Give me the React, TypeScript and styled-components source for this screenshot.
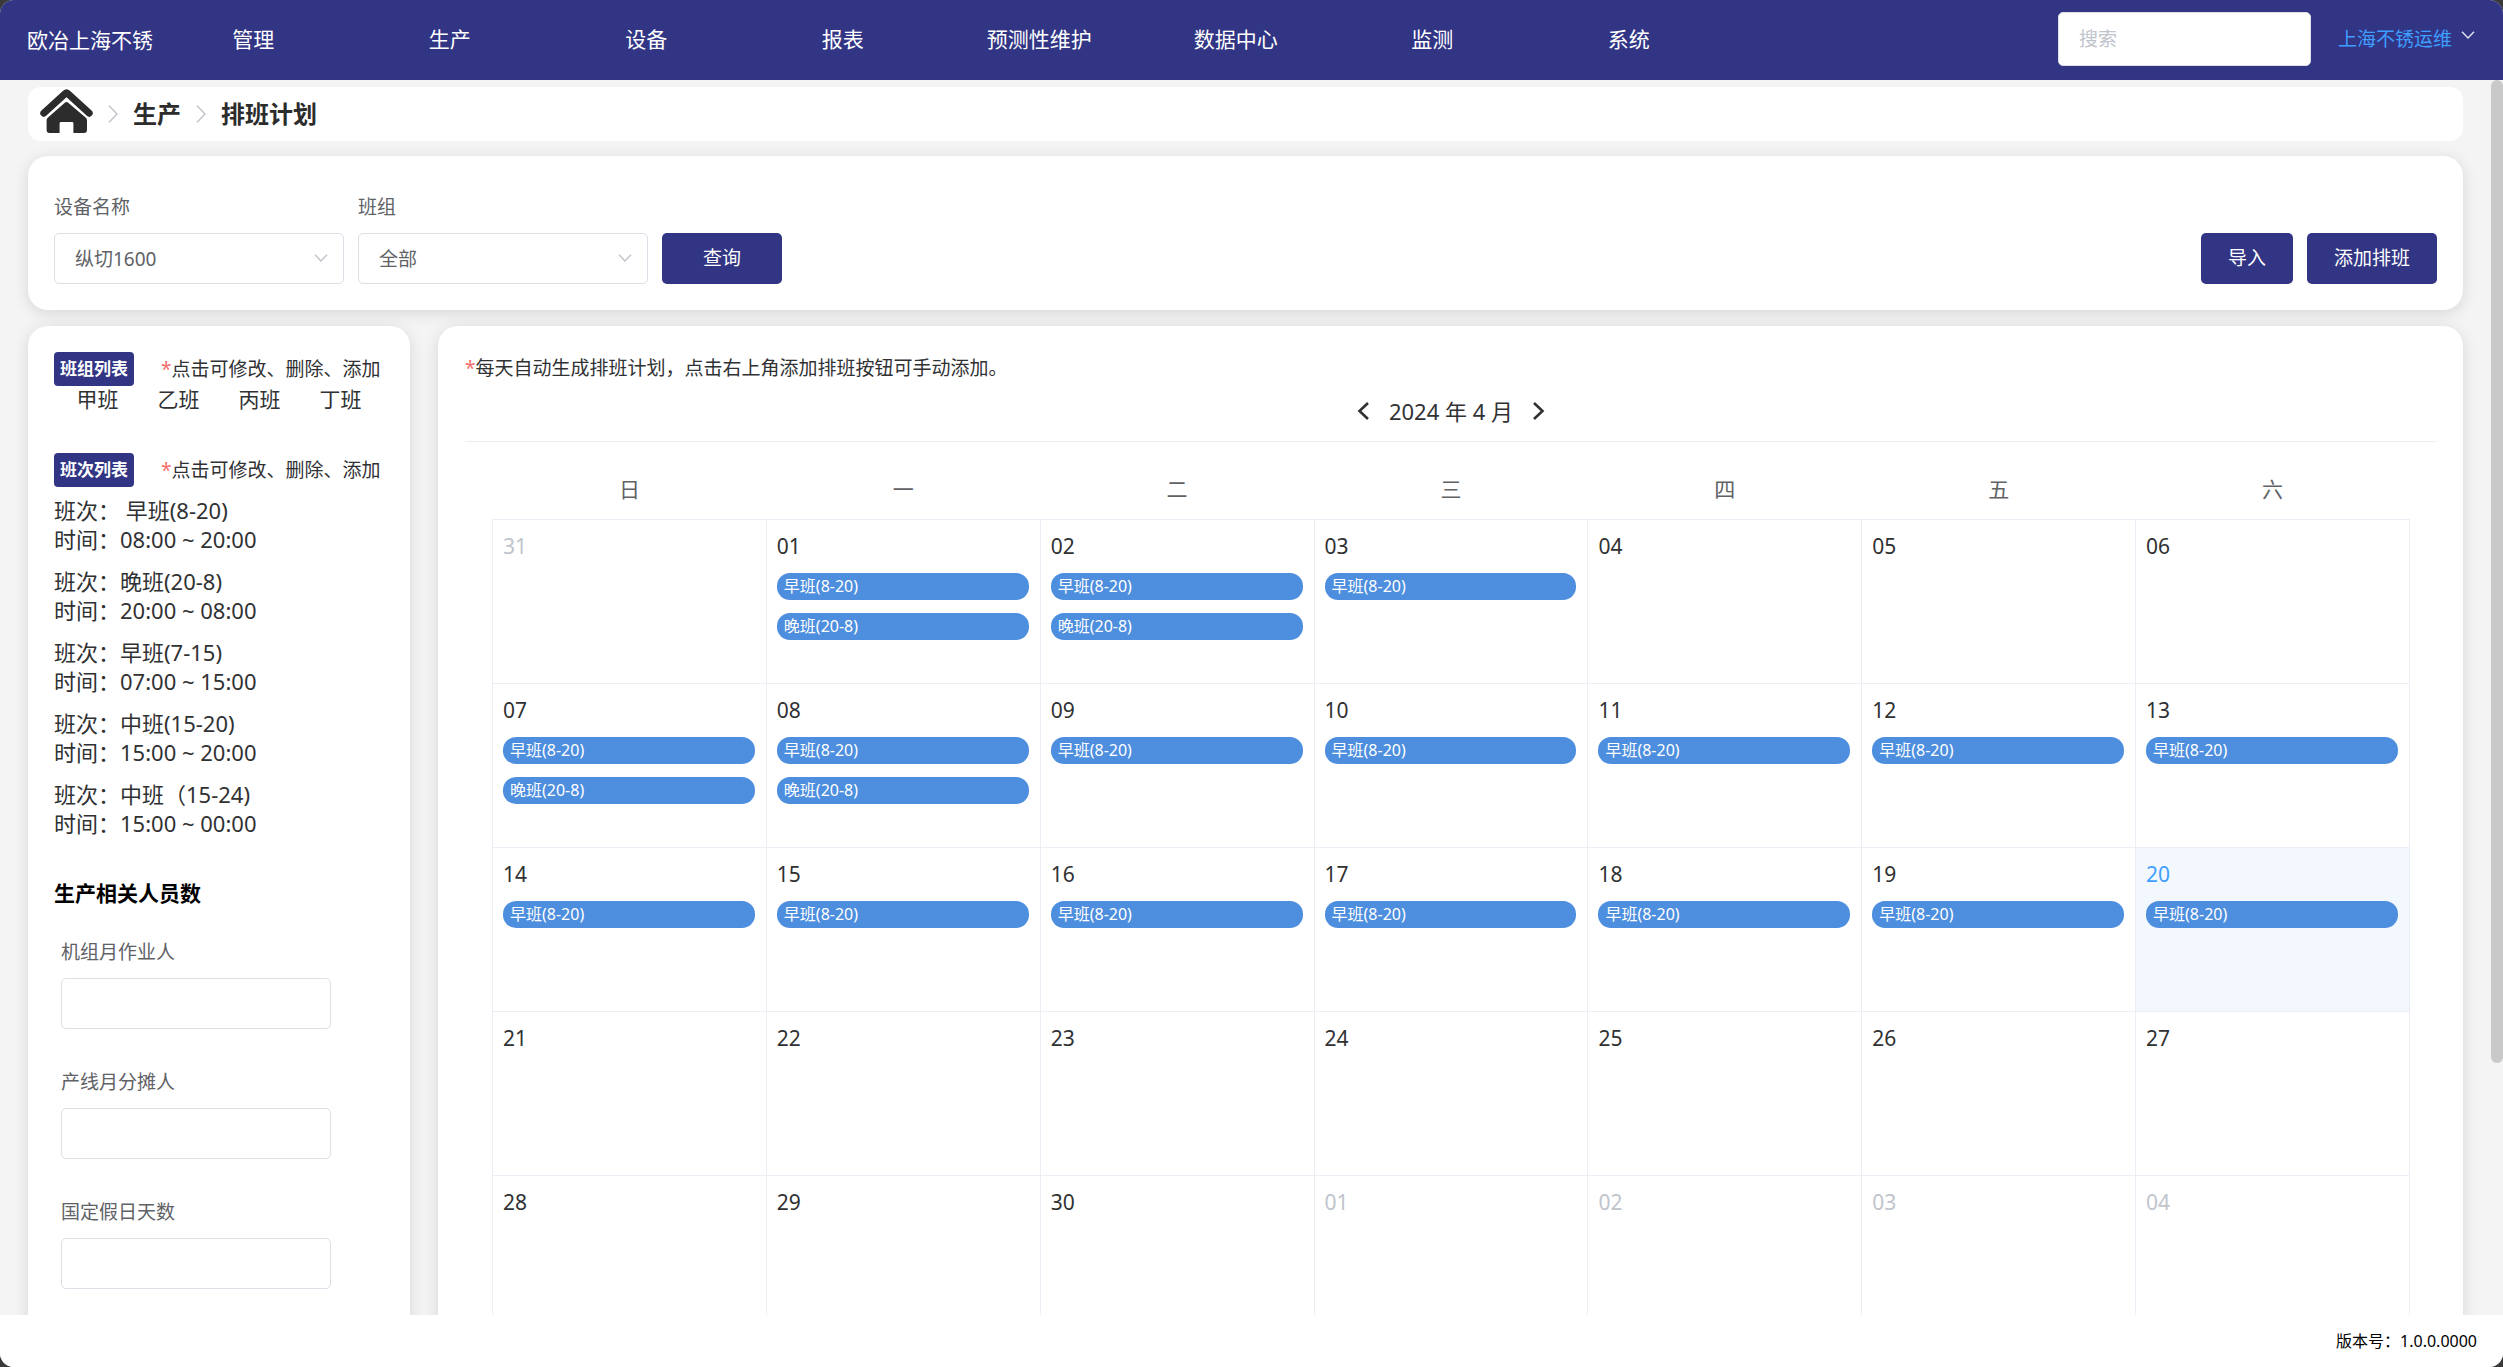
import React, { useId } from "react";
import styled, { createGlobalStyle } from "styled-components";

const navy = "#313584";

const GlobalStyle = createGlobalStyle`
  *, *::before, *::after { box-sizing: border-box; }
  body {
    margin: 0;
    background: #3a3a3a;
    color: #303133;
    font-family: "Noto Sans", "Noto Sans CJK SC", sans-serif;
    font-size: 21px;
    line-height: 28px;
  }
  button, input, select { font: inherit; margin: 0; }
  button { cursor: pointer; }
`;

const Shell = styled.div`
  display: flex;
  flex-direction: column;
  height: 100vh;
  overflow: hidden;
  border-radius: 14px;
  background: #f4f4f4;
`;

const Header = styled.header`
  display: flex;
  align-items: center;
  flex: none;
  height: 80px;
  padding: 0 28px 2px 27px;
  background: ${navy};
  color: #fff;
`;

const Brand = styled.div`
  flex: none;
  width: 128px;
  padding-top: 2px;
  white-space: nowrap;
`;

const Nav = styled.nav`
  display: flex;
  flex: 0 1 1572px;
`;

const NavLink = styled.a`
  flex: 1 1 0;
  color: inherit;
  text-align: center;
  text-decoration: none;
  white-space: nowrap;
`;

const HeaderTools = styled.div`
  display: flex;
  align-items: center;
  gap: 27px;
  margin-left: auto;
`;

const SearchInput = styled.input`
  width: 253px;
  height: 54px;
  padding: 0 20px;
  border: 1px solid #dcdfe6;
  border-radius: 5px;
  background: #fff;
  font-size: 19px;
  &::placeholder { color: #c0c4cc; opacity: 1; }
`;

const UserMenu = styled.button`
  display: flex;
  align-items: center;
  gap: 9px;
  padding: 0;
  border: 0;
  background: none;
  color: #409eff;
  font-size: 19px;
  white-space: nowrap;
  svg { color: #dfe3f0; margin-bottom: 8px; }
`;

const Main = styled.main`
  position: relative;
  display: flex;
  flex-direction: column;
  flex: 1 1 0;
  min-height: 0;
  overflow: hidden;
  padding: 7px 40px 0 28px;
`;

const ScrollThumb = styled.div`
  position: absolute;
  top: 0;
  right: 0;
  width: 12px;
  height: 79.6%;
  border-radius: 6px;
  background: #c9c9c9;
`;

const Breadcrumb = styled.nav`
  display: flex;
  align-items: center;
  flex: none;
  gap: 15px;
  height: 54px;
  padding: 0 12px;
  border-radius: 13px;
  background: #fff;
  font-size: 24px;
  font-weight: 700;
  color: #2c2c2c;
  svg { flex: none; color: #c0c4cc; }
`;

const HomeLink = styled.a`
  display: flex;
  padding-bottom: 6px;
  && svg { color: #2c2c2c; }
`;

const CrumbLink = styled.a`
  color: inherit;
  text-decoration: none;
`;

const Panel = styled.section`
  border-radius: 20px;
  background: #fff;
  box-shadow: 0 3px 16px rgba(0, 0, 0, 0.12);
`;

const FilterPanel = styled(Panel)`
  display: flex;
  align-items: flex-end;
  flex: none;
  gap: 14px;
  margin: 15px 0 16px;
  padding: 37px 26px 26px;
`;

const FieldBox = styled.div<{ $width: number }>`
  display: flex;
  flex-direction: column;
  gap: 12px;
  width: ${(p) => p.$width}px;
`;

const FieldLabel = styled.label`
  color: #606266;
  font-size: 19px;
`;

const SelectWrap = styled.div`
  position: relative;
  svg {
    position: absolute;
    right: 16px;
    top: 21px;
    color: #c0c4cc;
    pointer-events: none;
  }
`;

const control = `
  width: 100%;
  height: 51px;
  padding: 0 20px;
  border: 1px solid #dcdfe6;
  border-radius: 5px;
  background: #fff;
  color: #606266;
  font-size: 19px;
`;

const Select = styled.select`
  ${control}
  display: block;
  appearance: none;
`;

const TextInput = styled.input`
  ${control}
`;

const PrimaryButton = styled.button<{ $pad: number }>`
  height: 51px;
  padding: 0 ${(p) => p.$pad}px 2px;
  border: 0;
  border-radius: 5px;
  background: ${navy};
  color: #fff;
  font-size: 19px;
  white-space: nowrap;
`;

const Actions = styled.div`
  display: flex;
  gap: 14px;
  margin-left: auto;
`;

const Columns = styled.div`
  display: flex;
  flex: 1 0 auto;
  gap: 28px;
`;

const SidePanel = styled(Panel)`
  flex: 0 0 382px;
  padding: 26px;
`;

const ListHead = styled.div`
  display: flex;
  align-items: center;
  gap: 27px;
  height: 34px;
  white-space: nowrap;
`;

const TagButton = styled.button`
  width: 80px;
  height: 34px;
  padding: 0;
  border: 0;
  border-radius: 4px;
  background: ${navy};
  color: #fff;
  font-size: 17px;
  font-weight: 700;
  white-space: nowrap;
`;

const Hint = styled.p`
  margin: 0;
  font-size: 19px;
`;

const Star = styled.span`
  color: #f56c6c;
`;

const TeamGrid = styled.div`
  display: grid;
  grid-template-columns: repeat(4, 1fr);
  margin-bottom: 41px;
  padding: 0 3px;
  line-height: 26px;
`;

const TeamButton = styled.button`
  padding: 0;
  border: 0;
  background: none;
  color: inherit;
`;

const ShiftList = styled.ul`
  display: flex;
  flex-direction: column;
  gap: 13px;
  margin: 9px 0 41px;
  padding: 0;
  list-style: none;
  font-size: 22px;
  line-height: 29px;
`;

const ShiftLine = styled.div`
  white-space: pre;
`;

const SideTitle = styled.h2`
  margin: 0 0 30px;
  color: #000;
  font-size: 21px;
  font-weight: 700;
  line-height: 29px;
`;

const StaffForm = styled.form`
  display: flex;
  flex-direction: column;
  gap: 39px;
  padding-left: 7px;
`;

const CalendarPanel = styled(Panel)`
  flex: 1 1 0;
  min-width: 0;
  padding: 28px 26px 0 27px;
`;

const CalendarHead = styled.div`
  display: flex;
  align-items: center;
  justify-content: center;
  gap: 19px;
  padding: 15px 0 16px;
  border-bottom: 1px solid #ebeef5;
  font-size: 22px;
`;

const MonthButton = styled.button`
  display: flex;
  padding: 0;
  border: 0;
  background: none;
  color: #303133;
`;

const CalendarBody = styled.div`
  padding: 17px 27px 47px;
`;

const CalendarTable = styled.table`
  width: 100%;
  table-layout: fixed;
  border-collapse: collapse;
`;

const Weekday = styled.th`
  height: 60px;
  padding: 0;
  color: #606266;
  font-weight: 400;
`;

const DayCell = styled.td<{ $today: boolean }>`
  height: 164px;
  padding: 12px 11px 0 10px;
  border: 1px solid #ebeef5;
  background: ${(p) => (p.$today ? "#f2f8fe" : "#fff")};
  vertical-align: top;
`;

const DayNumber = styled.div<{ $tone: string }>`
  color: ${(p) => p.$tone};
`;

const EventList = styled.ul`
  display: flex;
  flex-direction: column;
  gap: 13px;
  margin: 13px 0 0;
  padding: 0;
  list-style: none;
`;

const EventBar = styled.li`
  height: 27px;
  padding: 0 7px;
  border-radius: 13px;
  background: #4d8ede;
  color: #fff;
  font-size: 16px;
  line-height: 27px;
`;

const Footer = styled.footer`
  flex: none;
  height: 52px;
  padding: 13px 26px 0;
  background: #fff;
  color: #000;
  font-size: 16px;
  line-height: 26px;
  text-align: right;
`;

const ChevronDown = () => (
  <svg width="14" height="8" viewBox="0 0 14 8" fill="none" stroke="currentColor" strokeWidth="1.4" aria-hidden="true">
    <path d="M1 0.8 L7 7 L13 0.8" />
  </svg>
);

const CrumbArrow = () => (
  <svg width="10" height="18" viewBox="0 0 10 18" fill="none" stroke="currentColor" strokeWidth="1.5" aria-hidden="true">
    <path d="M1 0.8 L9 9 L1 17.2" />
  </svg>
);

const MonthArrow = ({ next }: { next?: boolean }) => (
  <svg width="13" height="18" viewBox="0 0 13 18" fill="none" stroke="currentColor" strokeWidth="2.6" aria-hidden="true">
    <path d={next ? "M2 1 L10.5 9 L2 17" : "M11 1 L2.5 9 L11 17"} />
  </svg>
);

const HomeIcon = () => (
  <svg width="53" height="44" viewBox="0 0 53 44" aria-hidden="true">
    <path d="M3.8 24.2 L25.2 4.6 Q26.5 3.400 27.8 4.6 L49.2 24.2" fill="none" stroke="currentColor" strokeWidth="7" strokeLinecap="round" strokeLinejoin="round" />
    <path
      fill="currentColor"
      d="M24.8 13.800 Q26.5 12.400 28.2 13.800 L45.6 28.4 Q47 29.6 47 31.400 V41 Q47 44 44 44 H33.400 V34.400 Q33.400 33 32 33 H21 Q19.600 33 19.600 34.400 V44 H9.600 Q6.600 44 6.600 41 V31.400 Q6.600 29.6 8 28.4 Z"
    />
  </svg>
);

const navItems = ["管理", "生产", "设备", "报表", "预测性维护", "数据中心", "监测", "系统"];
const teams = ["甲班", "乙班", "丙班", "丁班"];
const shifts = [
  { name: " 早班(8-20)", time: "08:00 ~ 20:00" },
  { name: "晚班(20-8)", time: "20:00 ~ 08:00" },
  { name: "早班(7-15)", time: "07:00 ~ 15:00" },
  { name: "中班(15-20)", time: "15:00 ~ 20:00" },
  { name: "中班（15-24)", time: "15:00 ~ 00:00" },
];
const staffFields = ["机组月作业人", "产线月分摊人", "国定假日天数"];
const weekdays = ["日", "一", "二", "三", "四", "五", "六"];

const TODAY = 20;
const early = "早班(8-20)";
const late = "晚班(20-8)";

type Day = { label: string; inMonth: boolean; today: boolean; events: string[] };

const weeks: Day[][] = Array.from({ length: 5 }, (_, w) =>
  Array.from({ length: 7 }, (_, d) => {
    const n = w * 7 + d;
    const inMonth = n >= 1 && n <= 30;
    const date = n === 0 ? 31 : n > 30 ? n - 30 : n;
    const events: string[] = [];
    if (inMonth && (n <= 3 || (n >= 7 && n <= TODAY))) events.push(early);
    if ([1, 2, 7, 8].includes(n)) events.push(late);
    return { label: String(date).padStart(2, "0"), inMonth, today: n === TODAY, events };
  })
);

function SelectField({ label, value }: { label: string; value: string }) {
  const id = useId();
  return (
    <FieldBox $width={290}>
      <FieldLabel htmlFor={id}>{label}</FieldLabel>
      <SelectWrap>
        <Select id={id} defaultValue={value}>
          <option>{value}</option>
        </Select>
        <ChevronDown />
      </SelectWrap>
    </FieldBox>
  );
}

function StaffField({ label }: { label: string }) {
  const id = useId();
  return (
    <FieldBox $width={270}>
      <FieldLabel htmlFor={id}>{label}</FieldLabel>
      <TextInput id={id} type="text" />
    </FieldBox>
  );
}

function EditHint() {
  return (
    <Hint>
      <Star>*</Star>点击可修改、删除、添加
    </Hint>
  );
}

export default function App() {
  return (
    <>
      <GlobalStyle />
      <Shell>
        <Header>
          <Brand>欧冶上海不锈</Brand>
          <Nav>
            {navItems.map((item) => (
              <NavLink href="#" key={item}>{item}</NavLink>
            ))}
          </Nav>
          <HeaderTools>
            <SearchInput type="search" placeholder="搜索" aria-label="搜索" />
            <UserMenu type="button">
              上海不锈运维
              <ChevronDown />
            </UserMenu>
          </HeaderTools>
        </Header>
        <Main>
          <Breadcrumb>
            <HomeLink href="#" aria-label="首页"><HomeIcon /></HomeLink>
            <CrumbArrow />
            <CrumbLink href="#">生产</CrumbLink>
            <CrumbArrow />
            <span>排班计划</span>
          </Breadcrumb>
          <FilterPanel>
            <SelectField label="设备名称" value="纵切1600" />
            <SelectField label="班组" value="全部" />
            <PrimaryButton type="button" $pad={41}>查询</PrimaryButton>
            <Actions>
              <PrimaryButton type="button" $pad={27}>导入</PrimaryButton>
              <PrimaryButton type="button" $pad={27}>添加排班</PrimaryButton>
            </Actions>
          </FilterPanel>
          <Columns>
            <SidePanel>
              <ListHead>
                <TagButton type="button">班组列表</TagButton>
                <EditHint />
              </ListHead>
              <TeamGrid>
                {teams.map((team) => (
                  <TeamButton type="button" key={team}>{team}</TeamButton>
                ))}
              </TeamGrid>
              <ListHead>
                <TagButton type="button">班次列表</TagButton>
                <EditHint />
              </ListHead>
              <ShiftList>
                {shifts.map((shift) => (
                  <li key={shift.name}>
                    <ShiftLine>班次：{shift.name}</ShiftLine>
                    <ShiftLine>时间：{shift.time}</ShiftLine>
                  </li>
                ))}
              </ShiftList>
              <SideTitle>生产相关人员数</SideTitle>
              <StaffForm>
                {staffFields.map((label) => (
                  <StaffField label={label} key={label} />
                ))}
              </StaffForm>
            </SidePanel>
            <CalendarPanel>
              <Hint>
                <Star>*</Star>每天自动生成排班计划，点击右上角添加排班按钮可手动添加。
              </Hint>
              <CalendarHead>
                <MonthButton type="button" aria-label="上个月"><MonthArrow /></MonthButton>
                <span>2024 年 4 月</span>
                <MonthButton type="button" aria-label="下个月"><MonthArrow next /></MonthButton>
              </CalendarHead>
              <CalendarBody>
                <CalendarTable>
                  <thead>
                    <tr>
                      {weekdays.map((day) => (
                        <Weekday key={day} scope="col">{day}</Weekday>
                      ))}
                    </tr>
                  </thead>
                  <tbody>
                    {weeks.map((week, w) => (
                      <tr key={w}>
                        {week.map((day, d) => (
                          <DayCell key={d} $today={day.today}>
                            <DayNumber $tone={day.today ? "#409eff" : day.inMonth ? "#303133" : "#c0c4cc"}>
                              {day.label}
                            </DayNumber>
                            {day.events.length > 0 && (
                              <EventList>
                                {day.events.map((name) => (
                                  <EventBar key={name}>{name}</EventBar>
                                ))}
                              </EventList>
                            )}
                          </DayCell>
                        ))}
                      </tr>
                    ))}
                  </tbody>
                </CalendarTable>
              </CalendarBody>
            </CalendarPanel>
          </Columns>
          <ScrollThumb />
        </Main>
        <Footer>版本号：1.0.0.0000</Footer>
      </Shell>
    </>
  );
}
